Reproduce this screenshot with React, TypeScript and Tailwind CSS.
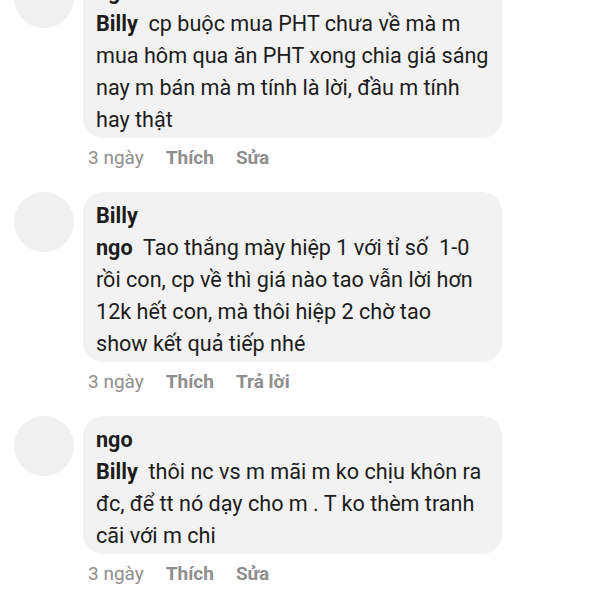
import { Fragment } from "react";

type Comment = {
  author: string;
  lines: { tag?: string; text: string }[];
  action: string;
};

const comments: Comment[] = [
  {
    author: "ngo",
    lines: [
      { tag: "Billy", text: "cp buộc mua PHT chưa về mà m" },
      { text: "mua hôm qua ăn PHT xong chia giá sáng" },
      { text: "nay m bán mà m tính là lời, đầu m tính" },
      { text: "hay thật" },
    ],
    action: "Sửa",
  },
  {
    author: "Billy",
    lines: [
      { tag: "ngo", text: "Tao thắng mày hiệp 1 với tỉ số  1-0" },
      { text: "rồi con, cp về thì giá nào tao vẫn lời hơn" },
      { text: "12k hết con, mà thôi hiệp 2 chờ tao" },
      { text: "show kết quả tiếp nhé" },
    ],
    action: "Trả lời",
  },
  {
    author: "ngo",
    lines: [
      { tag: "Billy", text: "thôi nc vs m mãi m ko chịu khôn ra" },
      { text: "đc, để tt nó dạy cho m . T ko thèm tranh" },
      { text: "cãi với m chi" },
    ],
    action: "Sửa",
  },
];

function CommentRow({ comment }: { comment: Comment }) {
  return (
    <div className="flex gap-[9px] pl-[14px]">
      <span className="size-[60px] shrink-0 rounded-full bg-[#f0f0f0]" />
      <div className="flex flex-col">
        <div className="w-[419px] rounded-[20px] bg-[#f2f2f2] px-[13px] pt-[8px] pb-[2px] text-[21.6px] leading-[32px] text-[#1c1c1c]">
          <p className="font-bold">{comment.author}</p>
          {comment.lines.map((line, i) => (
            <p key={i} className="whitespace-pre">
              {line.tag && (
                <Fragment>
                  <span className="font-bold">{line.tag}</span>
                  {"  "}
                </Fragment>
              )}
              {line.text}
            </p>
          ))}
        </div>
        <div className="flex gap-[22px] pl-[5px] pt-[5px] text-[19px] leading-[30px] text-[#8e8e8e]">
          <span>3 ngày</span>
          <span className="font-bold">Thích</span>
          <span className="font-bold">{comment.action}</span>
        </div>
      </div>
    </div>
  );
}

export default function App() {
  return (
    <div className="h-[600px] w-[600px] overflow-hidden bg-white font-['Roboto',sans-serif]">
      <div className="-mt-[32px] flex flex-col gap-[19px]">
        {comments.map((c, i) => (
          <CommentRow key={i} comment={c} />
        ))}
      </div>
    </div>
  );
}
